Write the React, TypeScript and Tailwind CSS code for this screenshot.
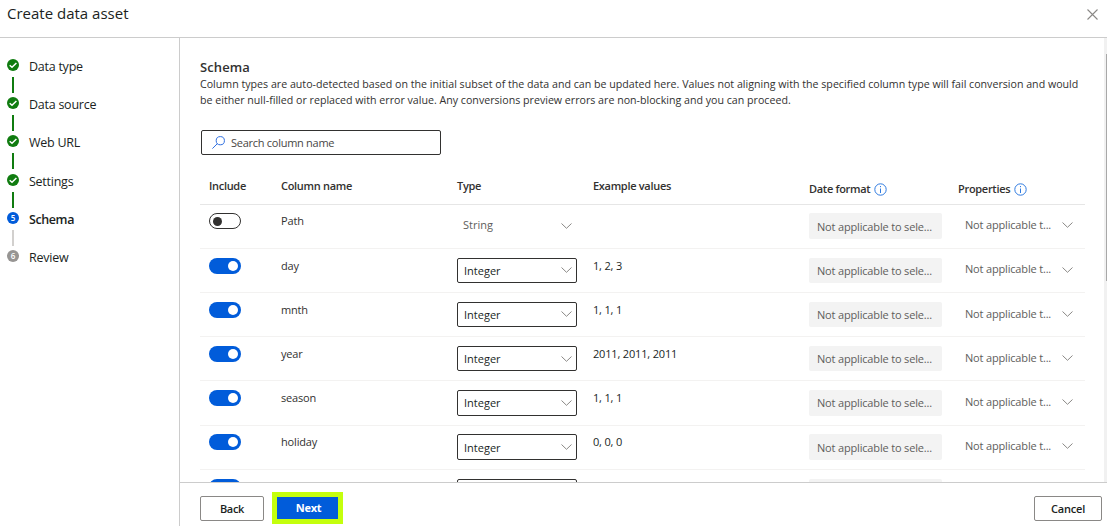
import React from "react";

const steps = [
  { label: "Data type", state: "done", gap: "h-[38px]" },
  { label: "Data source", state: "done", gap: "h-[38px]" },
  { label: "Web URL", state: "done", gap: "h-[38.5px]" },
  { label: "Settings", state: "done", gap: "h-[38px]" },
  { label: "Schema", state: "current", gap: "h-[38px]" },
  { label: "Review", state: "todo", gap: "h-[38px]" },
];

const rows = [
  { name: "Path", type: "String", values: "", on: false },
  { name: "day", type: "Integer", values: "1, 2, 3", on: true },
  { name: "mnth", type: "Integer", values: "1, 1, 1", on: true },
  { name: "year", type: "Integer", values: "2011, 2011, 2011", on: true },
  { name: "season", type: "Integer", values: "1, 1, 1", on: true },
  { name: "holiday", type: "Integer", values: "0, 0, 0", on: true },
];

const grid = "grid grid-cols-[72px_176px_136px_216px_149px_1fr] pl-[9px]";

function Chevron() {
  return (
    <svg className="h-[6px] w-[11px] shrink-0" viewBox="0 0 11 6" fill="none" stroke="#8a8886" strokeWidth="1">
      <path d="M0.5 0.5 5.5 5.3 10.5 0.5" />
    </svg>
  );
}

function Info() {
  return (
    <svg className="h-[13px] w-[13px]" viewBox="0 0 13 13" fill="none" stroke="#2f7be0" strokeWidth="1">
      <circle cx="6.5" cy="6.5" r="5.7" />
      <path d="M6.5 5.5V10M6.5 3V4.2" />
    </svg>
  );
}

function StepIcon({ state, n }: { state: string; n: number }) {
  if (state === "done") {
    return (
      <svg className="h-3 w-3 shrink-0" viewBox="0 0 12 12">
        <circle cx="6" cy="6" r="6" fill="#107c10" />
        <path d="M2.7 6.2 5 8.3 9.4 4" fill="none" stroke="#fff" strokeWidth="1.5" />
      </svg>
    );
  }
  return (
    <span
      className={`flex h-3 w-3 shrink-0 items-center justify-center rounded-full text-[8px] leading-none font-semibold text-white ${
        state === "current" ? "bg-[#015cda]" : "bg-[#979593]"
      }`}
    >
      {n}
    </span>
  );
}

function Toggle({ on }: { on: boolean }) {
  return (
    <span
      className={`flex h-4 w-8 items-center rounded-full ${
        on ? "justify-end bg-[#015cda] pr-[3px]" : "border border-[#323130] pl-[3px]"
      }`}
    >
      <span className={on ? "h-[10px] w-[10px] rounded-full bg-white" : "h-[9px] w-[9px] rounded-full bg-[#323130]"} />
    </span>
  );
}

export default function App() {
  return (
    <div className="flex h-[526px] w-[1107px] flex-col overflow-hidden bg-white font-['Open_Sans','Noto_Sans',sans-serif] text-[11px] text-[#323130]">
      <header className="flex h-[38px] shrink-0 items-start justify-between border-b border-[#cccccc] pr-[9px] pl-[7px]">
        <h1 className="pt-[3px] text-[15px] leading-5 text-[#201f1e]">Create data asset</h1>
        <svg className="mt-[9px] h-[11px] w-[11px]" viewBox="0 0 11 11" fill="none" stroke="#8a8886" strokeWidth="1.1">
          <path d="M0.5 0.5 10.5 10.5M10.5 0.5 0.5 10.5" />
        </svg>
      </header>
      <div className="flex min-h-0 flex-1">
        <nav className="w-[180px] shrink-0 border-r border-[#cccccc] pt-[21px] pl-[7px]">
          {steps.map((s, i) => (
            <div key={s.label} className={`flex ${s.gap}`}>
              <div className="flex w-3 flex-col items-center">
                <StepIcon state={s.state} n={i + 1} />
                {i < 5 && (
                  <span className={`mt-[6px] h-4 w-[2px] ${s.state === "done" ? "bg-[#107c10]" : "bg-[#d2d0ce]"}`} />
                )}
              </div>
              <span
                className={`-mt-px ml-[10px] text-[12.5px] leading-[17px] text-[#201f1e] ${
                  s.state === "current" ? "font-semibold tracking-[-0.4px]" : "tracking-[-0.25px]"
                }`}
              >
                {s.label}
              </span>
            </div>
          ))}
        </nav>
        <div className="flex min-w-0 flex-1 flex-col">
          <div className="flex min-h-0 flex-1">
            <main className="min-w-0 flex-1 overflow-hidden pt-[21px] pl-5">
              <h2 className="text-[13px] leading-4 font-semibold tracking-[0.1px] text-[#323130]">Schema</h2>
              <p className="mt-px text-[10.65px] leading-4 whitespace-nowrap">
                Column types are auto-detected based on the initial subset of the data and can be updated here. Values
                not aligning with the specified column type will fail conversion and would
                <br />
                be either null-filled or replaced with error value. Any conversions preview errors are non-blocking and
                you can proceed.
              </p>
              <div className="mt-[22px] ml-px flex h-[25px] w-60 items-center rounded-[2px] border border-[#323130] pl-[10px]">
                <svg className="h-[13px] w-[13px]" viewBox="0 0 13 13" fill="none" stroke="#2f6fe0" strokeWidth="1">
                  <circle cx="8.3" cy="4.7" r="4.1" />
                  <path d="M5.4 7.6 0.4 12.6" />
                </svg>
                <span className="ml-[6px] pt-px tracking-[-0.27px] text-[#484644]">Search column name</span>
              </div>
              <div
                className={`${grid} mt-[17px] h-[32.6px] w-[885px] border-b border-[#e6e6e6] font-semibold tracking-[-0.3px]`}
              >
                <span className="pt-[6px] leading-4">Include</span>
                <span className="pt-[6px] leading-4">Column name</span>
                <span className="pt-[6px] leading-4">Type</span>
                <span className="pt-[6px] leading-4">Example values</span>
                <span className="flex items-center gap-[4px] pt-[3px]">
                  Date format <Info />
                </span>
                <span className="flex items-center gap-[4px] pt-[3px]">
                  Properties <Info />
                </span>
              </div>
              {rows.map((r) => (
                <div
                  key={r.name}
                  className={`${grid} h-[44.2px] w-[885px] items-start border-b border-[#f3f2f1] pt-[8.8px] tracking-[-0.17px]`}
                >
                  <Toggle on={r.on} />
                  <span className="leading-4">{r.name}</span>
                  <div
                    className={`flex h-[25.4px] w-[120px] items-center justify-between rounded-[2px] border pr-1 ${
                      r.on ? "border-[#323130] pl-[6px] text-[#201f1e]" : "border-transparent pl-[5px] text-[#605e5c]"
                    }`}
                  >
                    <span className={r.on ? "pt-[1.5px] tracking-normal" : "pb-px tracking-normal"}>{r.type}</span>
                    <Chevron />
                  </div>
                  <span className="leading-4 text-[#201f1e]">{r.values}</span>
                  <div className="flex h-[25.4px] w-[133px] items-center rounded-[2px] bg-[#f3f3f3] pt-[1.5px] pl-2 text-[#605e5c]">
                    Not applicable to sele...
                  </div>
                  <div className="flex h-6 w-[115px] items-center justify-between pl-[7px] text-[#605e5c]">
                    <span>Not applicable t...</span>
                    <Chevron />
                  </div>
                </div>
              ))}
              <div className={`${grid} h-[44.2px] w-[885px] items-start pt-[8.8px]`}>
                <Toggle on />
                <span />
                <div className="h-[25.4px] w-[120px] rounded-[2px] border border-[#323130]" />
                <span />
                <div className="h-[25.4px] w-[133px] rounded-[2px] bg-[#f3f3f3]" />
              </div>
            </main>
            <div className="flex w-[3px] justify-end bg-[#f1f1f1] pt-4">
              <span className="h-[227px] w-px bg-[#a8a8a8]" />
            </div>
          </div>
          <footer className="-ml-px flex h-[44px] shrink-0 items-start border-t border-[#cccccc] pl-[21px] text-[#201f1e]">
            <button className="mt-[13px] h-[25px] w-16 rounded-[2px] border border-[#8a8886] pt-px font-semibold tracking-[-0.3px]">
              Back
            </button>
            <button className="mt-[9px] ml-2 h-[32px] w-[71px] border-[5px] border-[#c4ff0d] bg-[#015cda] pt-px pl-[2px] font-bold tracking-[-0.3px] text-white">
              Next
            </button>
            <button className="mt-[13px] mr-[5px] ml-auto h-[25px] w-[68px] rounded-[2px] border border-[#8a8886] pt-px font-semibold tracking-[-0.2px]">
              Cancel
            </button>
          </footer>
        </div>
      </div>
    </div>
  );
}
